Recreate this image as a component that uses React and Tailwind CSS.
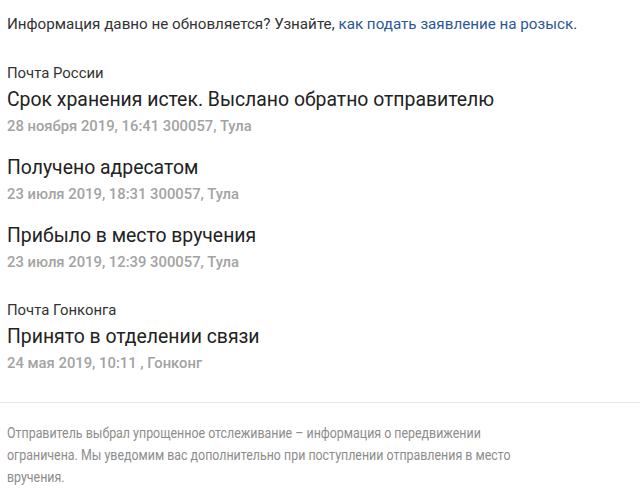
const events = [
  {
    carrier: 'Почта России',
    items: [
      { title: 'Срок хранения истек. Выслано обратно отправителю', meta: '28 ноября 2019, 16:41 300057, Тула' },
      { title: 'Получено адресатом', meta: '23 июля 2019, 18:31 300057, Тула' },
      { title: 'Прибыло в место вручения', meta: '23 июля 2019, 12:39 300057, Тула' },
    ],
  },
  {
    carrier: 'Почта Гонконга',
    items: [{ title: 'Принято в отделении связи', meta: '24 мая 2019, 10:11 , Гонконг' }],
  },
];

export default function App() {
  return (
    <div className="min-h-[497px] bg-white font-['Roboto',sans-serif] text-[#222] overflow-hidden">
      <div className="px-[7px] pt-[13px]">
        <p className="text-[15.2px] leading-[22px] text-[#333]">
          Информация давно не обновляется? Узнайте,{' '}
          <a className="text-[#2b5797]">как подать заявление на розыск</a>.
        </p>

        <div className="mt-[28px]">
          {events.map((group, gi) => (
            <div key={group.carrier} className={gi > 0 ? 'mt-[26px]' : ''}>
              <div className="text-[14.9px] leading-[20px] text-[#333]">{group.carrier}</div>
              {group.items.map((item, i) => (
                <div key={i} className={i > 0 ? 'mt-[16px]' : 'mt-[3px]'}>
                  <div className="text-[19.4px] leading-[28px] text-[#222]">{item.title}</div>
                  <div className="text-[14.8px] leading-[24px] font-medium text-[#a3a3a3]">{item.meta}</div>
                </div>
              ))}
            </div>
          ))}
        </div>
      </div>

      <div className="mt-[27px] border-t border-[#e6e6e6]" />

      <div className="px-[7px] pt-[19px]">
        <p className="w-[610px] origin-left scale-x-[0.85] text-[14.6px] leading-[22px] text-[#8c8c8c]">
          Отправитель выбрал упрощенное отслеживание – информация о передвижении ограничена. Мы уведомим вас дополнительно при поступлении отправления в место вручения.
        </p>
      </div>
    </div>
  );
}
